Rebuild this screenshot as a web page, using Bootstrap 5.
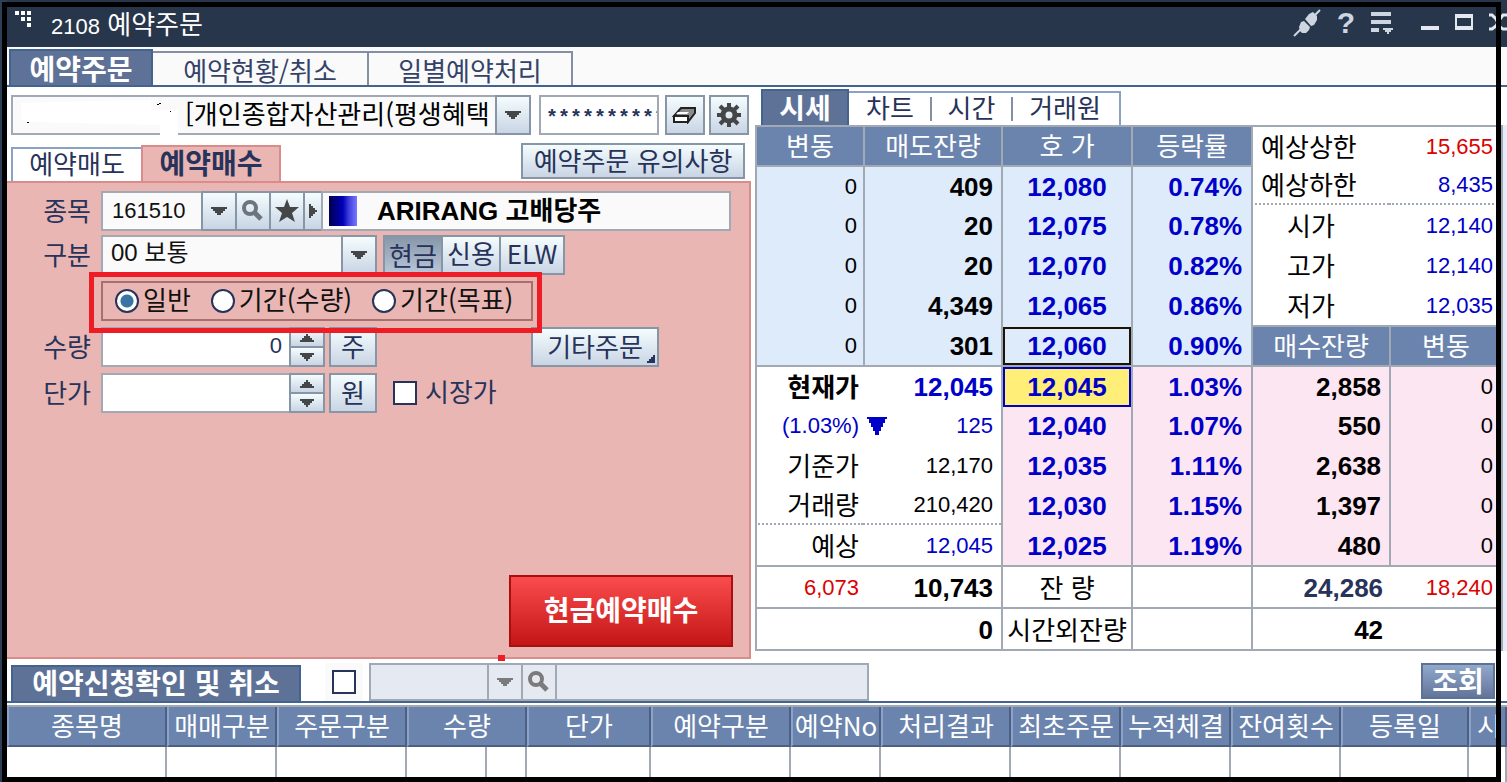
<!DOCTYPE html>
<html lang="ko">
<head>
<meta charset="utf-8">
<meta name="viewport" content="width=device-width, initial-scale=1">
<title>2108 예약주문</title>
<link href="https://cdn.jsdelivr.net/npm/bootstrap@5.3.0/dist/css/bootstrap.min.css" rel="stylesheet">
<script src="https://cdn.jsdelivr.net/npm/bootstrap@5.3.0/dist/js/bootstrap.bundle.min.js"></script>
<style>
:root{--navy:#27335a;--title:#27364b;--steel:#5d7296;--steel-line:#446490;--head:#6b84ad;--line:#a0a9b4;--btn-line:#8796a6;--pink:#eab6b3;--pink-line:#d88c8c;--up:#dc0000;--down:#0000c8}
body{font-family:"Noto Sans CJK KR",sans-serif;font-size:26px;line-height:30px;color:#000;background:#fff;overflow-x:hidden}
button,input,select{font:inherit;color:inherit;border-radius:0;padding:0;margin:0;min-width:0}
a{text-decoration:none;color:inherit}
.page{position:relative;min-height:100vh;padding-left:7px;overflow:hidden}
.page::before{content:"";position:absolute;inset:0 auto 0 0;width:7px;background:#2d3e57}
.marker{position:absolute;inset:2px 6px 0 2px;border:5px solid #000;pointer-events:none;z-index:5}
.titlebar{height:47px;background:var(--title);color:#fff;margin-left:-7px;padding:8px 0 0 15px}
.titlebar h1{font-size:26px;line-height:30px;font-weight:400;margin:0 0 0 20px}
.tool{border:0;background:none;color:#cdd5e0;display:flex;align-items:center;justify-content:center;height:30px}
.help{font-size:30px}
.num{font-family:"Liberation Sans","Noto Sans CJK KR",sans-serif;font-size:22px}
.strong{font-family:"Liberation Sans","Noto Sans CJK KR",sans-serif;font-weight:700}
.heavy{font-size:28px;font-weight:700}
.tabs{height:40px;background:#fafafa;border-bottom:2px solid var(--steel-line);padding-left:2px;color:#34426a}
.tabs a,.qtabs a{display:flex;align-items:center;justify-content:center}
.tabs a{height:34px;border:2px solid #8390a3;border-left:0;border-bottom:0;padding-top:2px}
.tabs a.on,.qtabs a.on{background:var(--steel);color:#fff;border:2px solid var(--steel-line);border-bottom:0}
.tabs a.on{height:36px;width:144px;padding:0}
.w-status{width:216px}.w-daily{width:204px}
.main{display:grid;grid-template-columns:744fr 752fr;column-gap:4px}
.fld{background:#fafafa;border:2px solid var(--line);height:40px}
.fld.wh{background:#fff}
.gbtn{border:2px solid var(--btn-line);background:linear-gradient(#f4fcfd,#c9d5e5);color:var(--navy);display:flex;align-items:center;justify-content:center;height:40px;flex:none;white-space:nowrap}
.gbtn.w20{width:20px}.gbtn.w36,.dis.w36{width:36px}.gbtn.w40{width:40px}.gbtn.w60{width:60px}.gbtn.w66{width:66px}
.ic{fill:#454647;shape-rendering:crispEdges}
.join{margin-left:-2px}
.g6{margin-left:6px}
.pick{position:relative;display:flex}
.pick select{appearance:none;-webkit-appearance:none;width:100%;white-space:nowrap;overflow:hidden}
.pick .gbtn{position:absolute;right:0;top:0;width:36px;pointer-events:none}
.account{flex:1 1 0;min-width:0}
.account select{padding:0 36px 5px 172px}
.redact{position:absolute;left:0;top:0}
.pw{flex:0 0 120px;width:120px;color:var(--navy);font-family:"Liberation Mono",monospace;font-size:20px;font-weight:700;padding:7px 0 0 5px;overflow:hidden}
.setup{margin-right:2px}
.subtabs{height:38px;padding-left:4px;margin-top:8px;color:var(--navy)}
.subtabs a{display:flex;align-items:center;justify-content:center;flex:none}
.sell{width:130px;height:34px;border:2px solid #8aa3c0;border-width:2px 0 0 2px;padding-bottom:4px}
.buy{width:140px;height:38px;margin-bottom:-2px;background:var(--pink);border:2px solid var(--pink-line);border-bottom:0;padding-bottom:6px}
.notice{width:224px;height:36px;margin:0 6px 2px auto;padding-bottom:2px}
.panel{min-height:478px;background:var(--pink);border:2px solid var(--pink-line);border-left:0;padding:8px 16px 10px 0;display:flex;flex-direction:column;color:var(--navy)}
.line{display:flex;align-items:center;margin-top:6px}
.indent{padding-left:94px}
.lbl{width:94px;padding:0 10px 2px 0;text-align:right;flex:none}
.code{width:102px;padding:0 0 0 9px;color:#111}
.stock{padding-left:6px;margin-right:2px}
.swatch{width:28px;height:30px;flex:none;background:linear-gradient(90deg,#000050,#0000b8 50%,#3c3cdc 70%,#7878ff)}
.kind{width:276px}
.kind select{padding:0 36px 4px 8px;color:#111;font-size:24px;font-family:"Liberation Sans","Noto Sans CJK KR",sans-serif}
.gbtn.down{background:linear-gradient(#8796a9,#b9c6d7)}
.period{position:relative;width:432px;height:40px;border:2px solid #a86f6b;color:#111;padding-left:12px;margin:0}
.period::after{content:"";position:absolute;inset:-11px -11px -14px -14px;border:5px solid #ee1c24;pointer-events:none;z-index:2}
.period label{padding:0 0 4px 4px}
.period label+input{margin-left:20px}
input[type=radio]{appearance:none;width:24px;height:24px;border:2px solid var(--navy);border-radius:50%;background:#fff;flex:none}
input[type=radio]:checked{background:radial-gradient(#3a74a4 0 6px,#fff 7px)}
input[type=checkbox]{appearance:none;width:24px;height:24px;border:2px solid var(--navy);background:#fff;flex:none}
.qty{width:190px;text-align:right;padding:0 7px 2px 0}
.spin{width:36px;margin-left:-2px}
.spin .gbtn{width:36px;height:21px}
.spin .gbtn+.gbtn{margin-top:-2px}
.unit{width:48px;padding-bottom:2px}
.etc{width:128px;position:relative;margin-left:154px;padding-bottom:2px}
.etc svg{position:absolute;right:2px;bottom:2px}
.order{width:224px;height:72px;border:2px solid #a81010;background:linear-gradient(#fa4c4c,#c41616);color:#fff;padding-bottom:4px}
.reddot{position:absolute;left:491px;bottom:-2px;width:7px;height:6px;background:#ee1c24}
.qtabs{height:36px;margin-top:2px;padding-left:6px;color:var(--navy)}
.qtabs a.on{width:88px;height:36px;padding-bottom:3px}
.qrest{width:272px;height:34px;border:2px solid #8aa3c0;border-width:2px 2px 0 0;padding:0 18px 4px 17px}
.qrest i{width:2px;height:24px;background:#8390a3;margin-top:4px}
.quotewrap{background:#e6ecf7;padding-right:4px}
.quote{width:100%;table-layout:fixed;border-collapse:separate;border-spacing:0;background:#fff;border:2px solid var(--line);border-width:0 2px 2px 0}
.quote td,.quote th{height:40px;padding:0 8px 0 0;line-height:30px;text-align:right;white-space:nowrap;border:0 solid var(--line);border-left-width:2px}
.quote th,.grid th{background:var(--head);color:#fff;text-align:center;font-weight:400}
.quote .strong{font-size:26px;padding-top:2px}
.quote .num{padding-top:2px}
.quote .h{text-align:center;padding:0 0 2px;border-top-width:2px}
.quote .t{border-top-width:2px}
.quote .n{border-left-width:0}
.quote .c{text-align:center;padding-right:0}
.quote .l{text-align:left;padding-left:8px}
.quote .v{padding-right:6px}
.quote .m{text-align:left;padding-left:34px}
.quote .s{background:#deebfb}
.quote .b{background:#fce6f2}
.quote .dot{border-bottom:2px dotted var(--line)}
.quote .tall td{height:42px}
.quote .pc{padding-right:9px}
.quote .pv{padding-right:4px}
.quote .navy{color:var(--navy)}
.k1{width:14.48%}.k2{width:18.5%}.k3{width:17.43%}.k4{width:16.09%}
.box{display:block;position:relative;height:38px;line-height:34px;border:2px solid #1c1206;margin-bottom:-2px}
.box.now{background:#ffee77;border-color:#0000c0;height:40px;line-height:37px}
.red{color:var(--up)}.blue{color:var(--down)}
.query{height:44px;border-bottom:2px solid var(--steel-line);padding:4px 12px 0 4px}
.query h2{width:290px;height:36px;margin:0;background:var(--steel);border:2px solid var(--steel-line);border-bottom:0;color:#fff;text-align:center;line-height:31px}
.chk{width:38px;height:38px;background:#fafafa;margin:0 6px 0 24px}
.dis{background:#e5eaf2;border:2px solid var(--line);height:38px;color:#7b7b7b}
.dis .ic{fill:#7b7b7b}
.d-code{width:120px}.d-name{width:314px}
.go{width:74px;height:36px;border:2px solid var(--steel);background:linear-gradient(#91a9cb,#62759a);color:#fff;line-height:30px;padding-bottom:3px;margin-bottom:2px}
.grid{width:100%;table-layout:fixed;border-collapse:separate;border-spacing:0;margin-top:2px;border-top:2px solid var(--line)}
.grid th{height:40px;padding:0 0 2px;border-left:2px solid #8ba3c8;border-right:2px solid #4d6084;border-bottom:2px solid #4d6084;white-space:nowrap;overflow:hidden}
.grid td{height:35px;padding:0;border-right:2px solid var(--line)}
.grid th:last-child{text-align:left;padding-left:6px}
.c40{width:40px}.c80{width:80px}.c90{width:90px}.c110{width:110px}.c124{width:124px}.c128{width:128px}.c130{width:130px}.c140{width:140px}.c160{width:160px}
</style>
</head>
<body>
<svg width="0" height="0" class="position-absolute" aria-hidden="true">
  <defs>
    <path id="tri" d="M0 0h16v2h-2v2h-2v2h-2v2H6V6H4V4H2V2H0z"/>
    <g id="lens"><circle cx="8" cy="8" r="6" fill="none" stroke="currentColor" stroke-width="4"/><path d="M12 12l7 7" stroke="currentColor" stroke-width="5"/></g>
    <path id="up" d="M6 0h2v2h2v2h2v2h2v2H0V6h2V4h2V2h2z"/>
    <path id="dn" d="M0 0h14v2h-2v2h-2v2H8v2H6V6H4V4H2V2H0z"/>
  </defs>
</svg>
<div class="page">
  <header class="titlebar d-flex align-items-start">
    <svg width="16" height="20" fill="#fff" aria-hidden="true"><path d="M0 3h4v4H0zM6 3h4v4H6zM12 3h4v4h-4zM6 9h4v4H6zM12 9h4v4h-4zM12 15h4v4h-4z"/></svg>
    <h1 class="flex-grow-1"><span class="num">2108</span> 예약주문</h1>
    <button class="tool me-3" aria-label="연결"><svg width="28" height="28" fill="currentColor"><path d="M1 27l7-7M20 8l7-7" stroke="currentColor" stroke-width="2"/><path d="M8 13l3-1 6 6-1 3-3 3H9l-2-2-1-4zM12 10l4-5 4-2 4 4v4l-3 5-3 1z"/></svg></button>
    <button class="tool strong help me-3" aria-label="도움말">?</button>
    <button class="tool" aria-label="메뉴"><svg width="22" height="24" fill="currentColor"><path d="M0 1h20v4H0zM0 9h20v4H0zM0 17h8v4H0zM12 17h10v2h-2v2h-2v2h-2v-2h-2v-2h-2z"/></svg></button>
    <button class="tool ms-4 ps-1" aria-label="최소화"><svg width="18" height="24" fill="#e4e9f1"><path d="M0 15h18v4H0z"/></svg></button>
    <button class="tool ms-3" aria-label="최대화"><svg width="18" height="24" fill="#e4e9f1" fill-rule="evenodd"><path d="M0 3h18v16H0zM2 7h14v8H2z"/></svg></button>
    <button class="tool ms-3" aria-label="닫기"><svg width="18" height="24"><path d="M0 4h3l4 4 4 8 3 2h4M0 18h3l4-3 4-7 3-4h4" fill="none" stroke="#e4e9f1" stroke-width="3"/></svg></button>
  </header>

  <nav class="tabs d-flex align-items-end">
    <a href="#" class="on heavy">예약주문</a><a href="#" class="w-status">예약현황/취소</a><a href="#" class="w-daily">일별예약처리</a>
  </nav>

  <main class="main">
    <section class="d-flex flex-column position-relative">
      <div class="d-flex mt-2 ms-1">
        <div class="pick account">
          <select class="fld" aria-label="계좌"><option>[개인종합자산관리(평생혜택</option></select>
          <span class="gbtn"><svg class="ic" width="16" height="8"><use href="#tri"/></svg></span>
          <svg class="redact" width="180" height="46" aria-hidden="true"><path d="M10 8l110-3h20v10h27v27h-18V30l-129-3-10-3z" fill="#fff"/><path d="M16 27h2v1h-2zM146 9h2v1h-2zM148 8h2v1h-2zM159 16h1v1h-1z" fill="#000"/></svg>
        </div>
        <input class="fld wh pw ms-2" type="text" value="**********" aria-label="비밀번호">
        <button class="gbtn w40 g6" aria-label="지우기"><svg width="26" height="18"><path d="M9 2h14v5l-7 9v-6H2z" fill="#8b8b8b" stroke="#222" stroke-width="2"/><path d="M2 10h14v6H2z" fill="#fff" stroke="#222" stroke-width="2"/><path d="M4 8l2-2h11l-2 2z" fill="#fff"/></svg></button>
        <button class="gbtn w40 ms-1 setup" aria-label="설정"><svg width="24" height="24"><circle cx="12" cy="12" r="6" fill="none" stroke="#454647" stroke-width="5"/><path d="M12 0v5M12 19v5M0 12h5M19 12h5M3 3l4 4M17 17l4 4M3 21l4-4M17 7l4-4" stroke="#454647" stroke-width="4"/></svg></button>
      </div>
      <div class="subtabs d-flex align-items-end">
        <a href="#" class="sell">예약매도</a><a href="#" class="buy heavy">예약매수</a>
        <button class="gbtn notice align-self-start">예약주문 유의사항</button>
      </div>
      <form class="panel flex-grow-1" onsubmit="return false">
        <div class="d-flex align-items-center">
          <label class="lbl" for="code">종목</label>
          <input id="code" class="fld code num" value="161510">
          <button type="button" class="gbtn join w36" aria-label="종목 목록"><svg class="ic" width="16" height="8"><use href="#tri"/></svg></button>
          <button type="button" class="gbtn join w36 text-secondary" aria-label="검색"><svg width="22" height="22"><use href="#lens"/></svg></button>
          <button type="button" class="gbtn join w36" aria-label="관심종목"><svg width="24" height="24" fill="#454647"><path d="M12 0l3 8h9l-7 6 3 9-8-5-8 5 3-9-7-6h9z"/></svg></button>
          <button type="button" class="gbtn join w20" aria-label="더보기"><svg class="ic" width="8" height="14"><path d="M0 0h2v2h2v2h2v2h2v2H6v2H4v2H2v2H0z"/></svg></button>
          <div class="fld join stock flex-grow-1 d-flex align-items-center"><span class="swatch"></span><output class="strong text-black text-nowrap ps-3 ms-1">ARIRANG 고배당주</output></div>
        </div>
        <div class="d-flex align-items-center mt-1">
          <label class="lbl" for="kind">구분</label>
          <div class="pick kind"><select id="kind" class="fld"><option>00 보통</option></select><span class="gbtn"><svg class="ic" width="16" height="8"><use href="#tri"/></svg></span></div>
          <button type="button" class="gbtn down w60 g6">현금</button>
          <button type="button" class="gbtn join w60 pb-1">신용</button>
          <button type="button" class="gbtn join w66 pb-1">ELW</button>
        </div>
        <div class="line indent">
          <fieldset class="period d-flex align-items-center">
            <input type="radio" name="p" id="p1" checked><label for="p1">일반</label>
            <input type="radio" name="p" id="p2"><label for="p2">기간(수량)</label>
            <input type="radio" name="p" id="p3"><label for="p3">기간(목표)</label>
          </fieldset>
        </div>
        <div class="line">
          <label class="lbl" for="qty">수량</label>
          <input id="qty" class="fld wh qty num" value="0">
          <div class="spin"><button type="button" class="gbtn" aria-label="수량 올림"><svg class="ic" width="14" height="8"><use href="#up"/></svg></button><button type="button" class="gbtn" aria-label="수량 내림"><svg class="ic" width="14" height="8"><use href="#dn"/></svg></button></div>
          <button type="button" class="gbtn unit ms-1">주</button>
          <button type="button" class="gbtn etc">기타주문<svg width="8" height="8" fill="#27335a"><path d="M6 0h2v8H0V6h2V4h2V2h2z"/></svg></button>
        </div>
        <div class="line">
          <label class="lbl" for="price">단가</label>
          <input id="price" class="fld wh qty num" value="">
          <div class="spin"><button type="button" class="gbtn" aria-label="단가 올림"><svg class="ic" width="14" height="8"><use href="#up"/></svg></button><button type="button" class="gbtn" aria-label="단가 내림"><svg class="ic" width="14" height="8"><use href="#dn"/></svg></button></div>
          <button type="button" class="gbtn unit ms-1">원</button>
          <input type="checkbox" id="mkt" class="ms-3"><label for="mkt" class="ps-2 pb-1">시장가</label>
        </div>
        <button class="order heavy mt-auto ms-auto">현금예약매수</button>
      </form>
      <span class="reddot"></span>
    </section>

    <section>
      <nav class="qtabs d-flex align-items-end">
        <a href="#" class="on heavy">시세</a>
        <div class="qrest d-flex align-items-center justify-content-between"><a href="#">차트</a><i></i><a href="#">시간</a><i></i><a href="#">거래원</a></div>
      </nav>
      <div class="quotewrap">
      <table class="quote">
        <colgroup><col class="k1"><col class="k2"><col class="k3"><col class="k4"><col class="k2"><col></colgroup>
        <tr><th class="h">변동</th><th class="h">매도잔량</th><th class="h">호 가</th><th class="h">등락률</th><td class="l t">예상상한</td><td class="n t num red">15,655</td></tr>
        <tr><td class="s t v num">0</td><td class="s t strong">409</td><td class="s t c strong blue">12,080</td><td class="s t pc strong blue">0.74%</td><td class="l dot">예상하한</td><td class="n num blue dot">8,435</td></tr>
        <tr><td class="s v num">0</td><td class="s strong">20</td><td class="s c strong blue">12,075</td><td class="s pc strong blue">0.78%</td><td class="m">시가</td><td class="n num blue">12,140</td></tr>
        <tr><td class="s v num">0</td><td class="s strong">20</td><td class="s c strong blue">12,070</td><td class="s pc strong blue">0.82%</td><td class="m">고가</td><td class="n num blue">12,140</td></tr>
        <tr><td class="s v num">0</td><td class="s strong">4,349</td><td class="s c strong blue">12,065</td><td class="s pc strong blue">0.86%</td><td class="m">저가</td><td class="n num blue">12,035</td></tr>
        <tr><td class="s v num">0</td><td class="s strong">301</td><td class="s c strong blue p-0"><span class="box">12,060</span></td><td class="s pc strong blue">0.90%</td><th class="h">매수잔량</th><th class="h">변동</th></tr>
        <tr><td class="t pv fw-bold">현재가</td><td class="n t strong blue">12,045</td><td class="b t c strong blue p-0"><span class="box now">12,045</span></td><td class="b t pc strong blue">1.03%</td><td class="b t strong">2,858</td><td class="b t num">0</td></tr>
        <tr><td class="pv num blue">(1.03%)</td><td class="n num blue"><span class="d-flex justify-content-between align-items-center ps-1"><svg width="20" height="18" fill="#0000c8"><path d="M0 0h20v2h-2v4h-2v4h-2v4h-2v4H8v-4H6v-4H4V6H2V2H0z"/></svg>125</span></td><td class="b c strong blue">12,040</td><td class="b pc strong blue">1.07%</td><td class="b strong">550</td><td class="b num">0</td></tr>
        <tr><td class="pv">기준가</td><td class="n num">12,170</td><td class="b c strong blue">12,035</td><td class="b pc strong blue">1.11%</td><td class="b strong">2,638</td><td class="b num">0</td></tr>
        <tr><td class="pv dot">거래량</td><td class="n num dot">210,420</td><td class="b c strong blue">12,030</td><td class="b pc strong blue">1.15%</td><td class="b strong">1,397</td><td class="b num">0</td></tr>
        <tr><td class="pv">예상</td><td class="n num blue">12,045</td><td class="b c strong blue">12,025</td><td class="b pc strong blue">1.19%</td><td class="b strong">480</td><td class="b num">0</td></tr>
        <tr class="tall"><td class="t pv num red">6,073</td><td class="n t strong">10,743</td><td class="t c">잔 량</td><td class="t"></td><td class="t strong v navy">24,286</td><td class="n t num red">18,240</td></tr>
        <tr class="tall"><td class="t"></td><td class="n t strong">0</td><td class="t c">시간외잔량</td><td class="t"></td><td class="t strong v">42</td><td class="n t"></td></tr>
      </table>
      </div>
    </section>
  </main>

  <div class="query d-flex align-items-end">
    <h2 class="heavy">예약신청확인 및 취소</h2>
    <div class="chk d-flex align-items-center justify-content-center"><input type="checkbox" aria-label="종목별 조회"></div>
    <input class="dis d-code" disabled aria-label="종목코드">
    <button class="dis join w36" disabled aria-label="목록"><svg class="ic d-block mx-auto" width="16" height="8"><use href="#tri"/></svg></button>
    <button class="dis join w36" disabled aria-label="검색"><svg width="22" height="22" class="d-block mx-auto"><use href="#lens"/></svg></button>
    <input class="dis join d-name" disabled aria-label="종목명">
    <button class="go heavy ms-auto">조회</button>
  </div>
  <table class="grid">
    <colgroup><col class="c160"><col class="c110"><col class="c130"><col class="c80"><col class="c40"><col class="c124"><col class="c140"><col class="c90"><col class="c130"><col class="c110"><col class="c110"><col class="c110"><col class="c128"><col></colgroup>
    <thead><tr><th>종목명</th><th>매매구분</th><th>주문구분</th><th colspan="2">수량</th><th>단가</th><th>예약구분</th><th>예약No</th><th>처리결과</th><th>최초주문</th><th>누적체결</th><th>잔여횟수</th><th>등록일</th><th>시</th></tr></thead>
    <tbody><tr><td></td><td></td><td></td><td></td><td></td><td></td><td></td><td></td><td></td><td></td><td></td><td></td><td></td><td></td></tr></tbody>
  </table>
  <div class="marker"></div>
</div>
</body>
</html>
